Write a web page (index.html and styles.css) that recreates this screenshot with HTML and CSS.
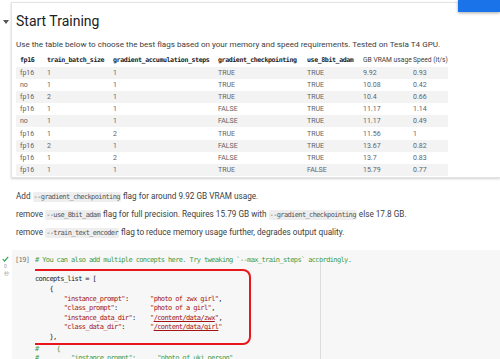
FILE: index.html
```html
<!DOCTYPE html>
<html lang="ja">
<head>
    <meta charset="UTF-8">
    <meta name="viewport" content="width=device-width, initial-scale=1.0">
    <title>Start Training</title>
    <link rel="stylesheet" href="styles.css">
</head>
<body>
    <div class="fab"></div>

    <div class="cell-row">
        <div class="gutter">
            <svg class="caret" width="6" height="4" viewBox="0 0 6 4"><polygon points="0,0 6,0 3,4" fill="#555"/></svg>
        </div>
        <div class="card">
            <h2>Start Training</h2>
            <p class="lead">Use the table below to choose the best flags based on your memory and speed requirements. Tested on Tesla T4 GPU.</p>
            <table class="flags">
                <colgroup>
                    <col style="width:27px"><col style="width:66px"><col style="width:105px"><col style="width:89px"><col style="width:56px"><col style="width:50px"><col style="width:39px">
                </colgroup>
                <thead>
                    <tr>
                        <th class="mono">fp16</th>
                        <th class="mono">train_batch_size</th>
                        <th class="mono">gradient_accumulation_steps</th>
                        <th class="mono">gradient_checkpointing</th>
                        <th class="mono">use_8bit_adam</th>
                        <th>GB VRAM usage</th>
                        <th>Speed (it/s)</th>
                    </tr>
                </thead>
                <tbody>
                    <tr><td>fp16</td><td>1</td><td>1</td><td>TRUE</td><td>TRUE</td><td>9.92</td><td>0.93</td></tr>
                    <tr><td>no</td><td>1</td><td>1</td><td>TRUE</td><td>TRUE</td><td>10.08</td><td>0.42</td></tr>
                    <tr><td>fp16</td><td>2</td><td>1</td><td>TRUE</td><td>TRUE</td><td>10.4</td><td>0.66</td></tr>
                    <tr><td>fp16</td><td>1</td><td>1</td><td>FALSE</td><td>TRUE</td><td>11.17</td><td>1.14</td></tr>
                    <tr><td>no</td><td>1</td><td>1</td><td>FALSE</td><td>TRUE</td><td>11.17</td><td>0.49</td></tr>
                    <tr><td>fp16</td><td>1</td><td>2</td><td>TRUE</td><td>TRUE</td><td>11.56</td><td>1</td></tr>
                    <tr><td>fp16</td><td>2</td><td>1</td><td>FALSE</td><td>TRUE</td><td>13.67</td><td>0.82</td></tr>
                    <tr><td>fp16</td><td>1</td><td>2</td><td>FALSE</td><td>TRUE</td><td>13.7</td><td>0.83</td></tr>
                    <tr><td>fp16</td><td>1</td><td>1</td><td>TRUE</td><td>FALSE</td><td>15.79</td><td>0.77</td></tr>
                </tbody>
            </table>
        </div>
    </div>

    <div class="notes">
        <p>Add <code>--gradient_checkpointing</code> flag for around 9.92 GB VRAM usage.</p>
        <p>remove <code>--use_8bit_adam</code> flag for full precision. Requires 15.79 GB with <code>--gradient_checkpointing</code> else 17.8 GB.</p>
        <p>remove <code>--train_text_encoder</code> flag to reduce memory usage further, degrades output quality.</p>
    </div>

    <div class="code-row">
        <div class="run-gutter">
            <svg class="check" width="7" height="6" viewBox="0 0 7 6"><polyline points="0.8,3.2 2.6,5 6.2,0.8" fill="none" stroke="#34a853" stroke-width="1.2"/></svg>
            <div class="run-time">0<br>秒</div>
        </div>
        <div class="code-cell">
            <div class="prompt">[19]</div>
            <div class="editor">
<pre class="line"><span class="cm"># You can also add multiple concepts here. Try tweaking `--max_train_steps` accordingly.</span></pre>
                <div class="highlight">
<pre class="line">concepts_list = [</pre>
<pre class="line">    {</pre>
<pre class="line">        <span class="st">"instance_prompt"</span>:      <span class="st">"photo of zwx girl"</span>,</pre>
<pre class="line">        <span class="st">"class_prompt"</span>:         <span class="st">"photo of a girl"</span>,</pre>
<pre class="line">        <span class="st">"instance_data_dir"</span>:    <span class="st">"<u>/content/data/zwx</u>"</span>,</pre>
<pre class="line">        <span class="st">"class_data_dir"</span>:       <span class="st">"<u>/content/data/girl</u>"</span></pre>
<pre class="line">    },</pre>
                </div>
<pre class="line"><span class="cm">#     {</span></pre>
<pre class="line"><span class="cm">#         "instance_prompt":      "photo of ukj person",</span></pre>
            </div>
        </div>
    </div>
</body>
</html>
```

FILE: styles.css
```css
html {
    overflow: hidden;
}
body {
    margin: 0;
    width: 500px;
    height: 359px;
    overflow: hidden;
    position: relative;
    background-color: #fff;
    color: #3c4043;
    font-family: Roboto, "Noto Sans", sans-serif;
}
.fab {
    position: absolute;
    top: 0;
    right: 0;
    width: 42px;
    height: 12px;
    background-color: #1a73e8;
    box-shadow: 0 1px 3px rgba(0,0,0,0.35);
}
.mono, code, pre {
    font-family: "DejaVu Sans Mono", "Liberation Mono", monospace;
    font-size: 7px;
    letter-spacing: -0.62px;
}
.cell-row {
    display: flex;
}
.gutter {
    width: 11px;
    flex: none;
}
.caret {
    display: block;
    margin: 20px 0 0 3px;
}
.card {
    flex: 1;
    min-width: 0;
    margin-top: 2px;
    padding: 0 0 1px 4px;
    border: 1px solid #e3e3e3;
    border-right: 0;
    box-shadow: 0 1px 2px rgba(0,0,0,0.18);
}
.card h2 {
    margin: 9px 0 0;
    font-size: 14px;
    line-height: 18px;
    font-weight: 400;
    color: #202124;
}
.lead {
    margin: 8px 0 0;
    font-size: 8.1px;
    line-height: 12px;
}
.flags {
    margin-top: 2px;
    table-layout: fixed;
    width: 432px;
    border-collapse: collapse;
    font-size: 7px;
    color: #5f6368;
}
.flags th {
    text-align: left;
    font-weight: 700;
    color: #202124;
    height: 15px;
    padding: 0 0 0 4px;
    white-space: nowrap;
}
.flags th.mono {
    font-size: 6.6px;
    letter-spacing: -0.4px;
}
.flags th:not(.mono) {
    font-weight: 400;
    font-size: 6.7px;
    color: #3c4043;
}
.flags td {
    height: 12.1px;
    padding: 0 0 0 4px;
    line-height: 12px;
}
.flags tbody tr:nth-child(odd) {
    background-color: #f3f3f3;
}
.notes {
    padding: 10px 0 0 16px;
}
.notes p {
    margin: 0;
    font-size: 8.2px;
    line-height: 17px;
}
.notes code {
    background-color: #eeeeee;
    color: #555;
    padding: 1px 1px;
    border-radius: 2px;
}
.code-row {
    display: flex;
    margin-top: 8px;
}
.run-gutter {
    width: 12px;
    flex: none;
    padding-top: 6px;
}
.check {
    display: block;
    margin-left: 2px;
}
.run-time {
    margin: 1px 0 0 4px;
    font-size: 5px;
    line-height: 7px;
    color: #a0a0a0;
}
.code-cell {
    flex: 1;
    min-width: 0;
    height: 120px;
    display: flex;
    padding-top: 6px;
    background: linear-gradient(to right, transparent 308px, #dcdcdc 308px, #dcdcdc 309px, transparent 309px) no-repeat 0 7px / 100% 100%, #f7f7f7;
}
.prompt {
    width: 20px;
    padding-left: 3px;
    flex: none;
    font-family: "DejaVu Sans Mono", "Liberation Mono", monospace;
    font-size: 7px;
    letter-spacing: -0.62px;
    line-height: 9.6px;
    color: #777;
}
.editor {
    flex: 1;
    min-width: 0;
    overflow: hidden;
}
pre.line {
    margin: 0;
    line-height: 9.6px;
    color: #1b1b1b;
}
.highlight + pre.line {
    line-height: 9.2px;
}
.highlight ~ pre.line {
    line-height: 9.2px;
}
.cm {
    color: #3e9a3e;
}
.st {
    color: #a31515;
}
.highlight {
    box-sizing: border-box;
    width: 230px;
    margin: 4px 0 0 -14px;
    padding: 4px 0 0 12px;
    border: 2px solid #e8171c;
    border-radius: 8px;
}
```
